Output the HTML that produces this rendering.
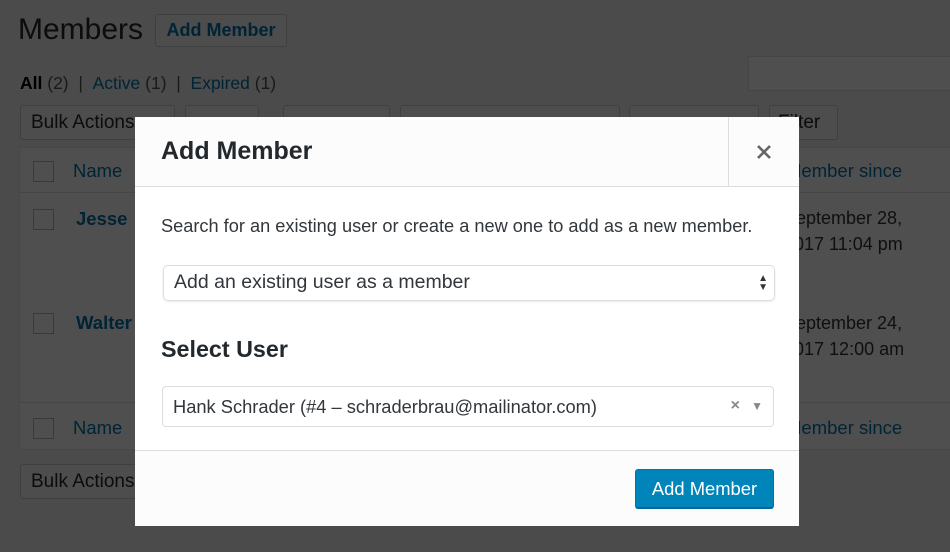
<!DOCTYPE html>
<html><head><meta charset="utf-8"><style>
*{box-sizing:border-box;margin:0;padding:0}
body{width:950px;height:552px;overflow:hidden;background:#f1f1f1;font-family:"Liberation Sans",sans-serif;position:relative;color:#23282d}
.a{position:absolute}
.link{color:#0073aa}
.btn{border:1px solid #ccc;background:#f7f7f7;border-radius:3px}
.cb{width:21px;height:21px;border:1px solid #b4b9be;background:#fff}
#ov{position:absolute;left:0;top:0;width:950px;height:552px;background:rgba(0,0,0,.69)}
#m{position:absolute;left:135px;top:117px;width:664px;height:409px;background:#fff}
</style></head><body>
<div class="a" style="left:18px;top:13px;font-size:30px;color:#23282d">Members</div>
<div class="a btn" style="left:155px;top:14px;width:132px;height:33px;font-size:18px;font-weight:bold;color:#0073aa;text-align:center;line-height:31px">Add Member</div>
<div class="a" style="left:20px;top:73px;font-size:17.5px;color:#555"><b style="color:#000">All</b> (2) &nbsp;| &nbsp;<span class="link">Active</span> (1) &nbsp;| &nbsp;<span class="link">Expired</span> (1)</div>
<div class="a" style="left:748px;top:56px;width:210px;height:35px;background:#fff;border:1px solid #ddd"></div>
<div class="a btn" style="left:20px;top:105px;width:155px;height:35px;font-size:19px;padding:6px 10px">Bulk Actions</div>
<div class="a btn" style="left:185px;top:105px;width:74px;height:35px"></div>
<div class="a btn" style="left:283px;top:105px;width:107px;height:35px"></div>
<div class="a btn" style="left:400px;top:105px;width:220px;height:35px"></div>
<div class="a btn" style="left:629px;top:105px;width:130px;height:35px"></div>
<div class="a btn" style="left:769px;top:105px;width:69px;height:35px;font-size:19px;padding:6px 8px">Filter</div>
<div class="a" style="left:19px;top:147px;width:940px;height:303px;background:#fff;border:1px solid #e5e5e5"></div>
<div class="a" style="left:19px;top:192px;width:940px;height:1px;background:#e1e1e1"></div>
<div class="a" style="left:19px;top:402px;width:940px;height:1px;background:#e1e1e1"></div>
<div class="a cb" style="left:33px;top:161px"></div>
<div class="a link" style="left:73px;top:160px;font-size:18.5px">Name</div>
<div class="a link" style="left:786px;top:160px;font-size:18.5px">Member since</div>
<div class="a cb" style="left:33px;top:209px"></div>
<div class="a link" style="left:76px;top:208px;font-size:18.5px;font-weight:bold">Jesse</div>
<div class="a" style="left:784px;top:205px;font-size:18px;line-height:26px;color:#333">September 28,<br>2017 11:04 pm</div>
<div class="a cb" style="left:33px;top:313px"></div>
<div class="a link" style="left:76px;top:312px;font-size:18.5px;font-weight:bold">Walter</div>
<div class="a" style="left:784px;top:310px;font-size:18px;line-height:26px;color:#333">September 24,<br>2017 12:00 am</div>
<div class="a cb" style="left:33px;top:418px"></div>
<div class="a link" style="left:73px;top:417px;font-size:18.5px">Name</div>
<div class="a link" style="left:786px;top:417px;font-size:18.5px">Member since</div>
<div class="a btn" style="left:20px;top:464px;width:155px;height:35px;font-size:19px;padding:6px 10px">Bulk Actions</div>
<div id="ov"></div>
<div id="m">
 <div class="a" style="left:0;top:0;width:664px;height:70px;background:#fcfcfc;border-bottom:1px solid #ddd"></div>
 <div class="a" style="left:593px;top:0;width:1px;height:70px;background:#ddd"></div>
 <div class="a" style="left:26px;top:20px;font-size:25px;font-weight:bold;color:#23282d">Add Member</div>
 <svg class="a" style="left:622px;top:28px" width="14" height="14" viewBox="0 0 14 14"><path d="M1 1L13 13M13 1L1 13" stroke="#666" stroke-width="2.6"/></svg>
 <div class="a" style="left:26px;top:99px;font-size:18.2px;color:#32373c">Search for an existing user or create a new one to add as a new member.</div>
 <div class="a" style="left:28px;top:148px;width:612px;height:36px;border:1px solid #ddd;border-radius:5px;box-shadow:0 1px 2px rgba(0,0,0,.08);font-size:19.5px;padding:5px 10px;color:#32373c">Add an existing user as a member<span style="position:absolute;right:6px;top:8px;font-size:10px;line-height:9px;color:#333">▲<br>▼</span></div>
 <div class="a" style="left:26px;top:219px;font-size:23.3px;font-weight:bold;color:#23282d">Select User</div>
 <div class="a" style="left:27px;top:269px;width:612px;height:41px;border:1px solid #ddd;border-radius:4px;font-size:18.3px;padding:9px 10px;color:#32373c">Hank Schrader (#4 – schraderbrau@mailinator.com)<span style="position:absolute;right:33px;top:10px;color:#888;font-size:16px;font-weight:bold">×</span><span style="position:absolute;right:10px;top:12px;color:#888;font-size:12px">▼</span></div>
 <div class="a" style="left:0;top:333px;width:664px;height:76px;background:#fcfcfc;border-top:1px solid #ddd"></div>
 <div class="a" style="left:500px;top:352px;width:139px;height:40px;background:#0085ba;border:1px solid #0073aa;border-bottom:2px solid #006799;border-radius:3px;color:#fff;font-size:18.4px;text-align:center;line-height:37px">Add Member</div>
</div>
</body></html>
